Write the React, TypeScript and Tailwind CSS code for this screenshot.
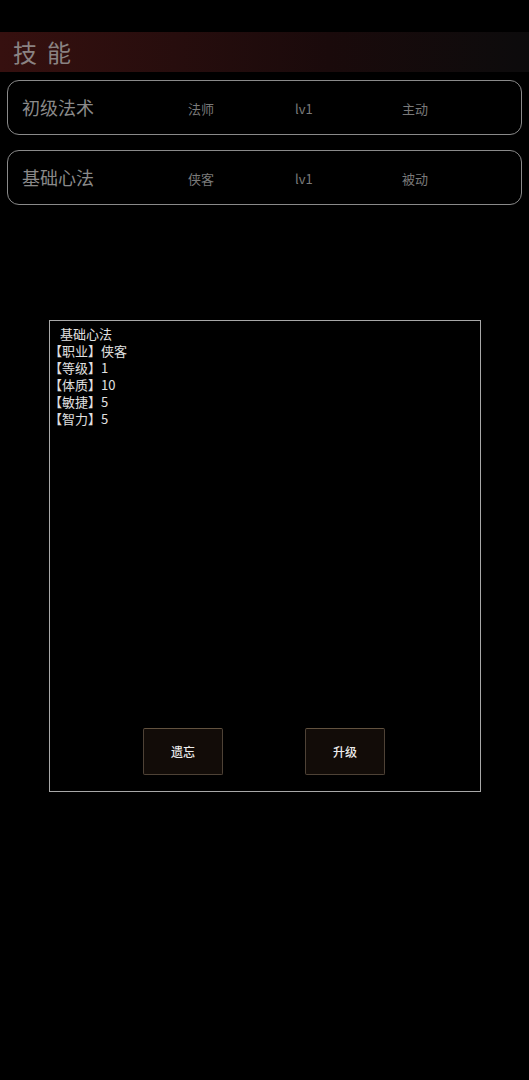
import React from "react";

const skills = [
  { name: "初级法术", job: "法师", level: "lv1", kind: "主动" },
  { name: "基础心法", job: "侠客", level: "lv1", kind: "被动" },
];

const details = [
  { label: "职业", value: "侠客" },
  { label: "等级", value: "1" },
  { label: "体质", value: "10" },
  { label: "敏捷", value: "5" },
  { label: "智力", value: "5" },
];

const font = { fontFamily: '"Noto Sans CJK SC", "Noto Sans", sans-serif' };

export default function App() {
  return (
    <div className="min-h-[1080px] w-[529px] bg-black pt-[32px]" style={font}>
      {/* 标题栏 */}
      <div className="flex h-[40px] items-center bg-gradient-to-r from-[#36100f] via-[#1a0a0b] via-62% to-[#0c0b0c] pl-[13px]">
        <span className="text-[24px] tracking-[10px] text-[#8a8282]">技能</span>
      </div>

      {/* 技能列表 */}
      <div className="mt-[8px] flex flex-col gap-[15px] px-[7px]">
        {skills.map((s) => (
          <div
            key={s.name}
            className="flex h-[55px] items-center rounded-[12px] border border-[#8a8a8a] pl-[14px]"
          >
            <span className="w-[166px] text-[18px] text-[#8a8a8a]">{s.name}</span>
            <span className="w-[107px] pt-[3px] text-[13px] text-[#7a7a7a]">{s.job}</span>
            <span className="w-[107px] pt-[3px] text-[13px] text-[#7a7a7a]">{s.level}</span>
            <span className="pt-[3px] text-[13px] text-[#7a7a7a]">{s.kind}</span>
          </div>
        ))}
      </div>

      {/* 详情面板 */}
      <div className="ml-[49px] mt-[115px] flex h-[472px] w-[432px] flex-col border border-[#a8a8a8] pb-[16px] pt-[4px]">
        <div className="text-[13px] leading-[17px] text-[#e0e0e0]">
          <div className="pl-[10px]">基础心法</div>
          {details.map((d) => (
            <div key={d.label} className="-ml-[1px] flex">
              <span>【</span>
              <span>{d.label}</span>
              <span>】</span>
              <span>{d.value}</span>
            </div>
          ))}
        </div>
        <div className="mt-auto flex gap-[82px] pl-[93px]">
          <button className="h-[47px] w-[80px] rounded-[2px] border border-[#4e4236] border-t-[#62523f] bg-[#120c08] text-[12px] font-medium text-[#eeeeee]">
            遗忘
          </button>
          <button className="h-[47px] w-[80px] rounded-[2px] border border-[#4e4236] border-t-[#62523f] bg-[#120c08] text-[12px] font-medium text-[#eeeeee]">
            升级
          </button>
        </div>
      </div>
    </div>
  );
}
